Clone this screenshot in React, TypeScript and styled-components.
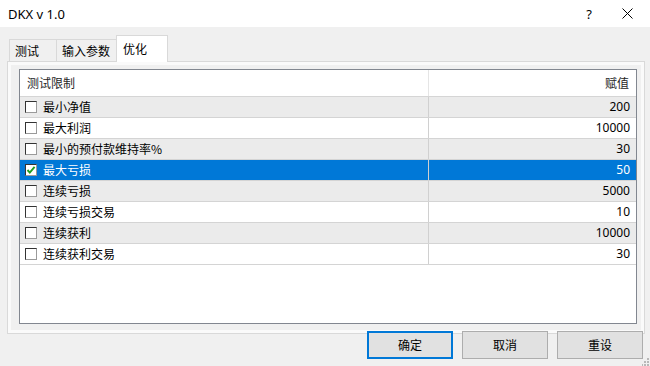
import React from "react";
import styled, { createGlobalStyle } from "styled-components";

const Global = createGlobalStyle`
  html, body { margin: 0; padding: 0; background: #f0f0f0; }
  body { font-family: "Segoe UI", "Noto Sans", "Noto Sans CJK SC", sans-serif; }
  * { box-sizing: border-box; }
`;

const Window = styled.div`
  position: relative;
  width: 650px;
  height: 366px;
  background: #f0f0f0;
  display: flex;
  flex-direction: column;
  overflow: hidden;
  font-size: 12px;
  color: #000;
`;

const TitleBar = styled.div`
  height: 27px;
  background: #fff;
  display: flex;
  align-items: center;
  padding-left: 8px;
  flex: none;
`;

const Title = styled.div`
  flex: 1;
  font-family: "Segoe UI", "Noto Sans", sans-serif;
  font-size: 13px;
  line-height: 15px;
  padding-top: 1px;
`;

const TitleButton = styled.div<{ $w: number }>`
  width: ${(p) => p.$w}px;
  height: 27px;
  display: flex;
  align-items: center;
  justify-content: center;
  font-family: "Segoe UI", "Noto Sans", sans-serif;
  font-size: 13px;
`;

const Body = styled.div`
  flex: 1;
  display: flex;
  flex-direction: column;
  padding: 8px 0 0 7px;
`;

const TabStrip = styled.div`
  height: 26px;
  display: flex;
  align-items: flex-end;
  padding-left: 2px;
  position: relative;
  z-index: 1;
`;

const Tab = styled.div<{ $w: number; $active?: boolean; $noLeft?: boolean }>`
  width: ${(p) => p.$w}px;
  height: ${(p) => (p.$active ? 27 : 22)}px;
  margin-bottom: ${(p) => (p.$active ? -1 : 0)}px;
  margin-left: ${(p) => (p.$active ? -1 : 0)}px;
  background: ${(p) => (p.$active ? "#fff" : "#f0f0f0")};
  border: 1px solid #d9d9d9;
  border-bottom: none;
  border-left: ${(p) => (p.$noLeft ? "none" : "1px solid #d9d9d9")};
  display: flex;
  align-items: center;
  padding-left: ${(p) => (p.$active ? 6 : 5)}px;
  padding-bottom: ${(p) => (p.$active ? 1 : 0)}px;
  font-family: "Noto Sans CJK SC", sans-serif;
  font-size: 12px;
  line-height: 14px;
`;

const Panel = styled.div`
  width: 638px;
  height: 273px;
  border: 1px solid #d9d9d9;
  background: #f0f0f0;
  box-shadow: inset 0 0 0 3px #fafafa;
  padding: 7px 7px 9px 11px;
  display: flex;
  flex-direction: column;
`;

const ListView = styled.div`
  flex: 1;
  background: #fff;
  border: 1px solid #828790;
  display: flex;
  flex-direction: column;
`;

const HeaderRow = styled.div`
  display: grid;
  grid-template-columns: 409px 1fr;
  height: 27px;
  border-bottom: 1px solid #d5d5d5;
  background: #fff;
`;

const HeaderCell = styled.div<{ $right?: boolean }>`
  display: flex;
  align-items: center;
  justify-content: ${(p) => (p.$right ? "flex-end" : "flex-start")};
  padding: ${(p) => (p.$right ? "0 7px 1px 0" : "0 0 1px 7px")};
  border-right: ${(p) => (p.$right ? "none" : "1px solid #e5e5e5")};
  font-family: "Noto Sans CJK SC", sans-serif;
  font-size: 12px;
  line-height: 14px;
  color: #262626;
`;

const Row = styled.div<{ $bg: string; $sel?: boolean }>`
  display: grid;
  grid-template-columns: 409px 1fr;
  height: 21px;
  border-bottom: 1px solid #d4d4d4;
  background: ${(p) => p.$bg};
  color: ${(p) => (p.$sel ? "#fff" : "#000")};
`;

const NameCell = styled.div`
  display: flex;
  align-items: center;
  gap: 6px;
  padding-left: 5px;
  border-right: 1px solid #d0d0d0;
  font-family: "Noto Sans CJK SC", sans-serif;
  font-size: 12px;
  line-height: 14px;
`;

const ValueCell = styled.div`
  display: flex;
  align-items: center;
  justify-content: flex-end;
  padding-right: 6px;
  font-family: "Segoe UI", "Noto Sans", sans-serif;
  font-size: 12px;
  line-height: 14px;
`;

const Box = styled.div`
  width: 12px;
  height: 12px;
  flex: none;
  background: #fff;
  border-top: 1px solid #333;
  border-left: 1px solid #333;
  border-right: 1px solid #9a9a9a;
  border-bottom: 1px solid #9a9a9a;
  display: flex;
  align-items: center;
  justify-content: center;
`;

const ButtonRow = styled.div`
  display: flex;
  justify-content: flex-end;
  gap: 9px;
  padding-right: 7px;
  margin-top: -3px;
  position: relative;
  z-index: 1;
`;

const Button = styled.div<{ $default?: boolean }>`
  width: 86px;
  height: 28px;
  background: #e1e1e1;
  border: ${(p) => (p.$default ? "2px solid #0078d7" : "1px solid #adadad")};
  display: flex;
  align-items: center;
  justify-content: center;
  font-family: "Noto Sans CJK SC", sans-serif;
  font-size: 12px;
  line-height: 14px;
`;

const Grip = styled.svg`
  position: absolute;
  right: 0;
  bottom: 0;
`;

const rows = [
  { name: "最小净值", value: "200" },
  { name: "最大利润", value: "10000" },
  { name: "最小的预付款维持率%", value: "30" },
  { name: "最大亏损", value: "50", checked: true, selected: true },
  { name: "连续亏损", value: "5000" },
  { name: "连续亏损交易", value: "10" },
  { name: "连续获利", value: "10000" },
  { name: "连续获利交易", value: "30" },
];

const Check = () => (
  <svg width="10" height="10" viewBox="0 0 10 10">
    <polyline points="1.5,5 3.8,7.6 8.6,1.8" fill="none" stroke="#1e9e1e" strokeWidth="1.9" />
  </svg>
);

export default function App() {
  return (
    <>
      <Global />
      <Window>
        <TitleBar>
          <Title>DKX v 1.0</Title>
          <TitleButton $w={30}>?</TitleButton>
          <TitleButton $w={46}>
            <svg width="11" height="11" viewBox="0 0 11 11">
              <path d="M0.5 0.5 L10.5 10.5 M10.5 0.5 L0.5 10.5" stroke="#000" strokeWidth="1" />
            </svg>
          </TitleButton>
        </TitleBar>
        <Body>
          <TabStrip>
            <Tab $w={48}>测试</Tab>
            <Tab $w={60} $noLeft>输入参数</Tab>
            <Tab $w={52} $active>优化</Tab>
          </TabStrip>
          <Panel>
            <ListView>
              <HeaderRow>
                <HeaderCell>测试限制</HeaderCell>
                <HeaderCell $right>赋值</HeaderCell>
              </HeaderRow>
              {rows.map((r, i) => (
                <Row
                  key={r.name}
                  $sel={r.selected}
                  $bg={r.selected ? "#0078d7" : i % 2 === 0 ? "#ebebeb" : "#ffffff"}
                >
                  <NameCell>
                    <Box>{r.checked && <Check />}</Box>
                    {r.name}
                  </NameCell>
                  <ValueCell>{r.value}</ValueCell>
                </Row>
              ))}
            </ListView>
          </Panel>
          <ButtonRow>
            <Button $default>确定</Button>
            <Button>取消</Button>
            <Button>重设</Button>
          </ButtonRow>
        </Body>
        <Grip width="8" height="8" viewBox="0 0 8 8">
          <rect x="5" y="0" width="2" height="2" fill="#b8b8b8" />
          <rect x="2" y="3" width="2" height="2" fill="#b8b8b8" />
          <rect x="5" y="3" width="2" height="2" fill="#b8b8b8" />
          <rect x="-1" y="6" width="2" height="2" fill="#b8b8b8" />
          <rect x="2" y="6" width="2" height="2" fill="#b8b8b8" />
          <rect x="5" y="6" width="2" height="2" fill="#b8b8b8" />
        </Grip>
      </Window>
    </>
  );
}
